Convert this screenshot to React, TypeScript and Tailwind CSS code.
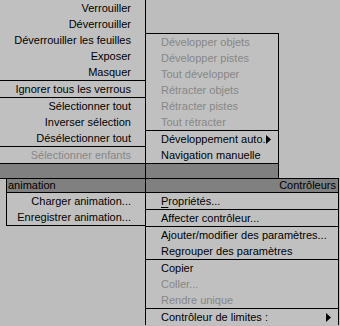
import React from "react";

type Item = { label: string; disabled?: boolean; arrow?: boolean; underline?: boolean } | "sep";

const Arrow: React.FC = () => (
  <svg width="5" height="9" viewBox="0 0 5 9" className="ml-auto shrink-0">
    <polygon points="0,0 5,4.5 0,9" fill="#000" />
  </svg>
);

const Row: React.FC<{ item: Exclude<Item, "sep">; align: "left" | "right"; pad: string }> = ({ item, align, pad }) => (
  <div
    className={`flex h-[16px] items-center leading-[16px] whitespace-nowrap ${pad} ${
      align === "right" ? "justify-end" : "justify-start"
    } ${item.disabled ? "text-[#878787]" : "text-black"}`}
  >
    {item.underline ? (
      <span>
        <span className="underline underline-offset-2">{item.label[0]}</span>
        {item.label.slice(1)}
      </span>
    ) : (
      <span>{item.label}</span>
    )}
    {item.arrow && <Arrow />}
  </div>
);

const MenuList: React.FC<{ items: Item[]; align: "left" | "right"; pad: string }> = ({ items, align, pad }) => (
  <>
    {items.map((it, i) =>
      it === "sep" ? (
        <div key={i} className="h-px bg-black" />
      ) : (
        <Row key={i} item={it} align={align} pad={pad} />
      )
    )}
  </>
);

const leftTop: Item[] = [
  { label: "Verrouiller" },
  { label: "Déverrouiller" },
  { label: "Déverrouiller les feuilles" },
  { label: "Exposer" },
  { label: "Masquer" },
  "sep",
  { label: "Ignorer tous les verrous" },
  "sep",
  { label: "Sélectionner tout" },
  { label: "Inverser sélection" },
  { label: "Désélectionner tout" },
  "sep",
  { label: "Sélectionner enfants", disabled: true },
  "sep",
];

const rightTop: Item[] = [
  { label: "Développer objets", disabled: true },
  { label: "Développer pistes", disabled: true },
  { label: "Tout développer", disabled: true },
  { label: "Rétracter objets", disabled: true },
  { label: "Rétracter pistes", disabled: true },
  { label: "Tout rétracter", disabled: true },
  "sep",
  { label: "Développement auto.", arrow: true },
  { label: "Navigation manuelle" },
  "sep",
];

const leftBottom: Item[] = [
  { label: "Charger animation..." },
  { label: "Enregistrer animation..." },
];

const rightBottom: Item[] = [
  { label: "Propriétés...", underline: true },
  "sep",
  { label: "Affecter contrôleur..." },
  "sep",
  { label: "Ajouter/modifier des paramètres..." },
  { label: "Regrouper des paramètres" },
  "sep",
  { label: "Copier" },
  { label: "Coller...", disabled: true },
  { label: "Rendre unique", disabled: true },
  "sep",
  { label: "Contrôleur de limites :", arrow: true },
];

export default function App() {
  return (
    <div
      className="w-[340px] h-[326px] overflow-hidden bg-[#bdbdbd] text-[11px]"
      style={{ fontFamily: '"Liberation Sans", Arial, sans-serif' }}
    >
      {/* top quads */}
      <div className="flex items-start">
        <div className="w-[146px] border-r border-black bg-[#c0c0c0]">
          <MenuList items={leftTop} align="right" pad="pr-[14px]" />
          <div className="h-[14px] bg-[#808080]" />
        </div>
        <div className="mt-[33px] w-[133px] border-t border-r border-black bg-[#c0c0c0]">
          <MenuList items={rightTop} align="left" pad="pl-[15px] pr-[8px]" />
          <div className="h-[14px] bg-[#808080]" />
        </div>
      </div>

      {/* bottom quads */}
      <div className="flex w-[339px] items-start border-t border-black">
        <div className="w-[6px]" />
        <div className="w-[139px] border-l border-b border-black bg-[#c0c0c0]">
          <div className="h-[13px] bg-[#808080] pl-[1px] leading-[13px] text-black">animation</div>
          <div className="h-px bg-black" />
          <MenuList items={leftBottom} align="right" pad="pr-[14px]" />
        </div>
        <div className="w-[194px] border-l border-r border-black bg-[#c0c0c0]">
          <div className="h-[13px] bg-[#808080] pr-[2px] text-right leading-[13px] text-black">Contrôleurs</div>
          <div className="h-px bg-black" />
          <MenuList items={rightBottom} align="left" pad="pl-[15px] pr-[7px]" />
        </div>
      </div>
    </div>
  );
}
